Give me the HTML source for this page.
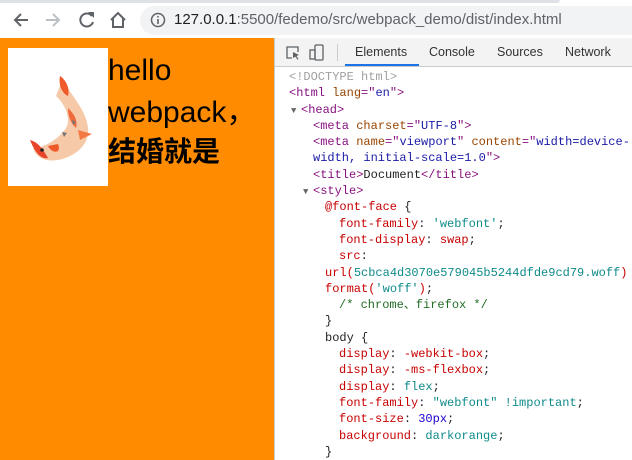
<!DOCTYPE html>
<html><head><style>
body{margin:0;width:632px;height:460px;overflow:hidden;background:#fff;font-family:"Liberation Sans",sans-serif;position:relative}
.top{position:absolute;left:0;top:0;width:632px;height:38px;background:#fff}
.strip{position:absolute;left:0;top:0;width:560px;height:3px;background:#dee1e6;border-radius:0 0 6px 0}
.addr{position:absolute;left:140px;top:6px;width:520px;height:29px;border-radius:15px;background:#f1f3f4}
.url{position:absolute;left:174px;top:11px;font-size:15px;color:#202124}
.url span{color:#5f6368}
.left{position:absolute;left:0;top:38px;width:274px;height:422px;background:#ff8c00}
.img{position:absolute;left:8px;top:48px;width:100px;height:138px;background:#fff}
.t{position:absolute;left:108px;font-size:30px;color:#000;line-height:40px}
.dev{position:absolute;left:274px;top:38px;width:358px;height:422px;background:#fff;border-left:1px solid #cbcbcb;overflow:hidden}
.bar{position:absolute;left:0;top:0;width:358px;height:28px;background:#f3f3f3;border-bottom:1px solid #cbcbcb}
.tab{position:absolute;top:7px;font-size:12.5px;color:#333}
.code{position:absolute;left:0;top:31px;width:358px;font-family:"Liberation Mono",monospace;font-size:12px;line-height:16.3px;color:#222}
.code div{height:16.3px;white-space:pre}
.g{color:#a0a0a0}.tg{color:#881280}.an{color:#994500}.av{color:#1a1aa6}.p{color:#c80000}.v{color:#0f8a8a}.c{color:#236e25}.n{color:#1c00cf}
.tri{display:inline-block;width:10px;color:#666;font-size:9px}
</style></head><body>
<div class="top"><div class="strip"></div>
<svg style="position:absolute;left:12px;top:12px" width="18" height="16"><path d="M16 8H3M9 2L3 8l6 6" stroke="#5f6368" stroke-width="2" fill="none"/></svg>
<svg style="position:absolute;left:44px;top:12px" width="18" height="16"><path d="M2 8h13M9 2l6 6-6 6" stroke="#bdc1c6" stroke-width="2" fill="none"/></svg>
<svg style="position:absolute;left:78px;top:11px" width="18" height="18"><path d="M14 5A6.5 6.5 0 1 0 15 11" stroke="#5f6368" stroke-width="2" fill="none"/><path d="M10 1h6v6z" fill="#5f6368"/></svg>
<svg style="position:absolute;left:108px;top:10px" width="20" height="20"><path d="M3 10L10 3l7 7M5 8v9h10V8" stroke="#5f6368" stroke-width="2" fill="none"/></svg>
<div class="addr"></div>
<svg style="position:absolute;left:150px;top:12px" width="16" height="16"><circle cx="8" cy="8" r="6.5" stroke="#5f6368" stroke-width="1.5" fill="none"/><path d="M8 7v5M8 4v1.5" stroke="#5f6368" stroke-width="1.6"/></svg>
<div class="url">127.0.0.1<span>:5500/fedemo/src/webpack_demo/dist/index.html</span></div>
</div>
<div class="left"></div>
<div class="img"><svg width="100" height="138" viewBox="0 0 100 138">
<path d="M55 30 C60 45 78 60 80 80 C82 100 62 110 50 112 C38 114 28 110 25 100 C35 100 50 92 58 80 C64 70 56 55 48 48 Z" fill="#f6c9a8"/>
<path d="M52 28 C50 38 55 46 60 48 C62 40 58 32 52 28Z" fill="#f05a2a"/>
<path d="M22 92 C26 102 32 112 40 110 C34 100 30 94 22 92Z" fill="#e8442a"/>
<path d="M40 98 C44 106 54 106 50 96Z" fill="#f05a2a"/>
<path d="M60 60 C66 66 70 72 68 80 C62 74 60 68 60 60Z" fill="#ef6a3a"/>
<circle cx="34" cy="102" r="1.8" fill="#222"/>
<path d="M70 82 L84 86 L72 92Z" fill="#f37a45"/>
<path d="M64 72 l4 2 -3 3z M54 84 l5 1 -3 4z" fill="#777"/>
</svg></div>
<div class="t" style="top:51px">hello</div>
<div class="t" style="top:93px">webpack，</div>
<div class="t" style="top:130px;font-family:'Noto Sans CJK SC',sans-serif;font-weight:bold;font-size:28px">结婚就是</div>
<div class="dev">
<div class="bar">
<svg style="position:absolute;left:10px;top:7px" width="16" height="16"><path d="M7 13H2V2h11v5" stroke="#5f6368" stroke-width="1.3" fill="none"/><path d="M8 7l6 3-2.5 1 2 3-1 .7-2-3L8 13z" fill="#5f6368"/></svg>
<svg style="position:absolute;left:34px;top:6px" width="16" height="18"><rect x="6" y="1" width="8" height="15" rx="1" stroke="#5f6368" stroke-width="1.3" fill="none"/><rect x="1" y="6" width="5" height="9" stroke="#5f6368" stroke-width="1.3" fill="none"/></svg>
<div style="position:absolute;left:62px;top:6px;width:1px;height:17px;background:#ccc"></div>
<div class="tab" style="left:80px">Elements</div>
<div style="position:absolute;left:70px;top:26px;width:74px;height:2px;background:#1a73e8"></div>
<div class="tab" style="left:154px">Console</div>
<div class="tab" style="left:222px">Sources</div>
<div class="tab" style="left:290px">Network</div>
</div>
<div class="code"><div style="padding-left:14px"><span class="g">&lt;!DOCTYPE html&gt;</span></div><div style="padding-left:14px"><span class="tg">&lt;html</span> <span class="an">lang</span><span class="tg">="</span><span class="av">en</span><span class="tg">"&gt;</span></div><div style="padding-left:16px"><span class="tri">▼</span><span class="tg">&lt;head&gt;</span></div><div style="padding-left:38px"><span class="tg">&lt;meta</span> <span class="an">charset</span><span class="tg">="</span><span class="av">UTF-8</span><span class="tg">"&gt;</span></div><div style="padding-left:38px"><span class="tg">&lt;meta</span> <span class="an">name</span><span class="tg">="</span><span class="av">viewport</span><span class="tg">"</span> <span class="an">content</span><span class="tg">="</span><span class="av">width=device-</span></div><div style="padding-left:38px"><span class="av">width, initial-scale=1.0</span><span class="tg">"&gt;</span></div><div style="padding-left:38px"><span class="tg">&lt;title&gt;</span>Document<span class="tg">&lt;/title&gt;</span></div><div style="padding-left:28px"><span class="tri">▼</span><span class="tg">&lt;style&gt;</span></div><div style="padding-left:50px"><span class="p">@font-face</span> {</div><div style="padding-left:64px"><span class="p">font-family</span>: <span class="v">'webfont'</span>;</div><div style="padding-left:64px"><span class="p">font-display</span>: <span class="p">swap</span>;</div><div style="padding-left:64px"><span class="p">src</span>:</div><div style="padding-left:50px"><span class="p">url(</span><span class="v">5cbca4d3070e579045b5244dfde9cd79.woff</span><span class="p">)</span></div><div style="padding-left:50px"><span class="p">format(</span><span class="v">'woff'</span><span class="p">)</span>;</div><div style="padding-left:64px"><span class="c">/* chrome、firefox */</span></div><div style="padding-left:50px">}</div><div style="padding-left:50px">body {</div><div style="padding-left:64px"><span class="p">display</span>: <span class="p">-webkit-box</span>;</div><div style="padding-left:64px"><span class="p">display</span>: <span class="p">-ms-flexbox</span>;</div><div style="padding-left:64px"><span class="p">display</span>: <span class="v">flex</span>;</div><div style="padding-left:64px"><span class="p">font-family</span>: <span class="v">"webfont"</span> <span class="v">!important</span>;</div><div style="padding-left:64px"><span class="p">font-size</span>: <span class="n">30px</span>;</div><div style="padding-left:64px"><span class="p">background</span>: <span class="v">darkorange</span>;</div><div style="padding-left:50px">}</div></div>
</div>
</body></html>
